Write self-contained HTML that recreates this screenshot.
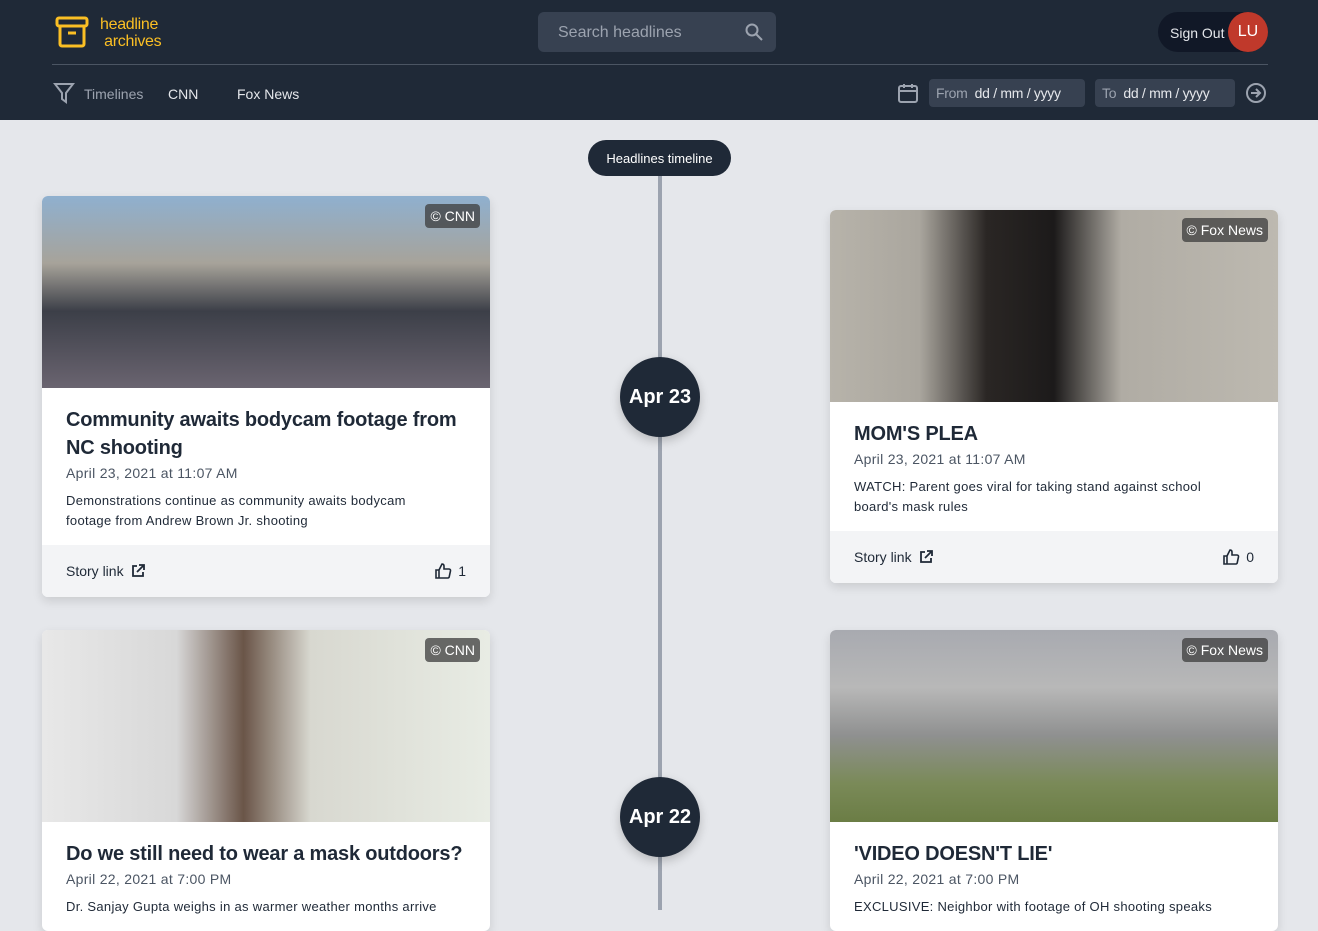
<!DOCTYPE html><html><head><meta charset="utf-8"><style>
*{box-sizing:border-box;margin:0;padding:0}
body{width:1318px;height:910px;overflow:hidden;background:#e5e7eb;font-family:"Liberation Sans",sans-serif;position:relative}
.hdr{position:absolute;left:0;top:0;width:1318px;height:120px;background:#1f2937}
.a{position:absolute}
.card{position:absolute;width:448px;background:#fff;border-radius:6px;overflow:hidden;box-shadow:0 4px 10px rgba(0,0,0,.12)}
.img{height:192px;position:relative}
.badge{position:absolute;right:10px;top:8px;background:rgba(60,60,60,.75);color:#fff;font-size:14px;padding:4px 5px;border-radius:4px}
.body{padding:18px 24px 14px}
.t{font-size:20px;color:#1f2937;line-height:28px;font-weight:bold;letter-spacing:-.2px}
.d{font-size:14px;color:#4b5563;margin-top:3px;letter-spacing:.3px}
.p{font-size:13px;color:#1f2937;margin-top:10px;line-height:20px;letter-spacing:.3px;max-width:372px}
.ft{background:#f3f4f6;height:52px;padding:0 24px;display:flex;align-items:center;justify-content:space-between;font-size:14px;color:#1f2937}
.ft span{display:flex;align-items:center;gap:6px}
.circ{position:absolute;width:80px;height:80px;border-radius:50%;background:#1f2937;color:#fff;font-size:20px;font-weight:bold;display:flex;align-items:center;justify-content:center;box-shadow:0 4px 10px rgba(0,0,0,.2)}
</style></head><body>
<div class="hdr">
<svg class="a" style="left:55px;top:16px" width="34" height="32" viewBox="0 0 34 32" fill="none" stroke="#fbbf24" stroke-width="3"><rect x="2" y="2" width="30" height="8" rx="2"/><path d="M5 10v18a2 2 0 0 0 2 2h20a2 2 0 0 0 2-2V10"/><path d="M13 17h8"/></svg>
<div class="a" style="left:100px;top:16px;color:#fbbf24;font-size:16px;line-height:17px;letter-spacing:-.3px">headline<br>&nbsp;archives</div>
<div class="a" style="left:538px;top:12px;width:238px;height:40px;background:#374151;border-radius:6px;color:#9ca3af;font-size:16px;padding:12px 20px">Search headlines</div>
<svg class="a" style="left:745px;top:23px" width="18" height="18" viewBox="0 0 18 18" fill="none" stroke="#9ca3af" stroke-width="2"><circle cx="7" cy="7" r="5.5"/><path d="M11 11l6 6"/></svg>
<div class="a" style="left:1158px;top:12px;width:110px;height:40px;background:#111827;border-radius:20px;color:#e5e7eb;font-size:14px;padding:13px 12px">Sign Out</div>
<div class="a" style="left:1228px;top:12px;width:40px;height:40px;border-radius:50%;background:#c0392b;color:#fff;font-size:16px;text-align:center;line-height:40px">LU</div>
<div class="a" style="left:52px;top:64px;width:1216px;height:1px;background:#4b5563"></div>
<svg class="a" style="left:53px;top:82px" width="22" height="22" viewBox="0 0 22 22" fill="none" stroke="#9ca3af" stroke-width="2"><path d="M2 2h18l-7 9v9l-4-3v-6z"/></svg>
<div class="a" style="left:84px;top:86px;color:#9ca3af;font-size:14px">Timelines</div>
<div class="a" style="left:168px;top:86px;color:#e5e7eb;font-size:14px">CNN</div>
<div class="a" style="left:237px;top:86px;color:#e5e7eb;font-size:14px">Fox News</div>
<svg class="a" style="left:897px;top:82px" width="22" height="22" viewBox="0 0 22 22" fill="none" stroke="#9ca3af" stroke-width="2"><rect x="2" y="4" width="18" height="16" rx="2"/><path d="M2 9h18M7 2v4M15 2v4"/></svg>
<div class="a" style="left:929px;top:79px;width:156px;height:28px;background:#374151;border-radius:4px;font-size:14px;padding:6px 7px;color:#e5e7eb;letter-spacing:-.3px"><span style="color:#9ca3af">From</span>&nbsp; dd / mm / yyyy</div>
<div class="a" style="left:1095px;top:79px;width:140px;height:28px;background:#374151;border-radius:4px;font-size:14px;padding:6px 7px;color:#e5e7eb;letter-spacing:-.3px"><span style="color:#9ca3af">To</span>&nbsp; dd / mm / yyyy</div>
<svg class="a" style="left:1245px;top:82px" width="22" height="22" viewBox="0 0 22 22" fill="none" stroke="#9ca3af" stroke-width="2"><circle cx="11" cy="11" r="9"/><path d="M6 11h9M11 7l4 4-4 4"/></svg>
</div>
<div class="a" style="left:658px;top:170px;width:4px;height:740px;background:#9ca3af"></div>
<div class="a" style="left:588px;top:140px;width:143px;height:36px;border-radius:18px;background:#1f2937;color:#fff;font-size:13px;text-align:center;line-height:38px">Headlines timeline</div>
<div class="circ" style="left:620px;top:357px">Apr 23</div>
<div class="circ" style="left:620px;top:777px">Apr 22</div>

<div class="card" style="left:42px;top:196px"><div class="img" style="background:linear-gradient(180deg,#8fb0cf 0%,#a7a39a 35%,#3c3f48 60%,#6a6470 100%)"><div class="badge">© CNN</div></div>
<div class="body"><div class="t">Community awaits bodycam footage from NC shooting</div><div class="d">April 23, 2021 at 11:07 AM</div><div class="p">Demonstrations continue as community awaits bodycam footage from Andrew Brown Jr. shooting</div></div>
<div class="ft"><span>Story link <svg width="16" height="16" viewBox="0 0 16 16" fill="none" stroke="#1f2937" stroke-width="1.8"><path d="M7 3H3v10h10V9M9 2h5v5M14 2L7 9"/></svg></span><span><svg width="18" height="18" viewBox="0 0 18 18" fill="none" stroke="#1f2937" stroke-width="1.6"><path d="M2 8h3v8H2zM5 8l3-6c1.5 0 2 1 2 2v3h5a1.5 1.5 0 0 1 1.5 1.8l-1.2 5.7A1.5 1.5 0 0 1 13.8 16H5"/></svg> 1</span></div></div>

<div class="card" style="left:830px;top:210px"><div class="img" style="background:linear-gradient(90deg,#b7b3aa 0%,#aaa69e 20%,#2a2624 35%,#1c1a1a 50%,#b0aca4 65%,#bdb9b0 100%)"><div class="badge">© Fox News</div></div>
<div class="body"><div class="t">MOM'S PLEA</div><div class="d">April 23, 2021 at 11:07 AM</div><div class="p">WATCH: Parent goes viral for taking stand against school board's mask rules</div></div>
<div class="ft"><span>Story link <svg width="16" height="16" viewBox="0 0 16 16" fill="none" stroke="#1f2937" stroke-width="1.8"><path d="M7 3H3v10h10V9M9 2h5v5M14 2L7 9"/></svg></span><span><svg width="18" height="18" viewBox="0 0 18 18" fill="none" stroke="#1f2937" stroke-width="1.6"><path d="M2 8h3v8H2zM5 8l3-6c1.5 0 2 1 2 2v3h5a1.5 1.5 0 0 1 1.5 1.8l-1.2 5.7A1.5 1.5 0 0 1 13.8 16H5"/></svg> 0</span></div></div>

<div class="card" style="left:42px;top:630px"><div class="img" style="background:linear-gradient(90deg,#e8e8e8 0%,#d8d8d8 30%,#6a5548 45%,#d8d8d0 60%,#e8ece4 100%)"><div class="badge">© CNN</div></div>
<div class="body"><div class="t">Do we still need to wear a mask outdoors?</div><div class="d">April 22, 2021 at 7:00 PM</div><div class="p" style="max-width:none">Dr. Sanjay Gupta weighs in as warmer weather months arrive</div></div></div>

<div class="card" style="left:830px;top:630px"><div class="img" style="background:linear-gradient(180deg,#a8aab0 0%,#b8b8b8 30%,#8f9090 55%,#7a8a58 80%,#6b7d45 100%)"><div class="badge">© Fox News</div></div>
<div class="body"><div class="t">'VIDEO DOESN'T LIE'</div><div class="d">April 22, 2021 at 7:00 PM</div><div class="p" style="max-width:none">EXCLUSIVE: Neighbor with footage of OH shooting speaks</div></div></div>
</body></html>
